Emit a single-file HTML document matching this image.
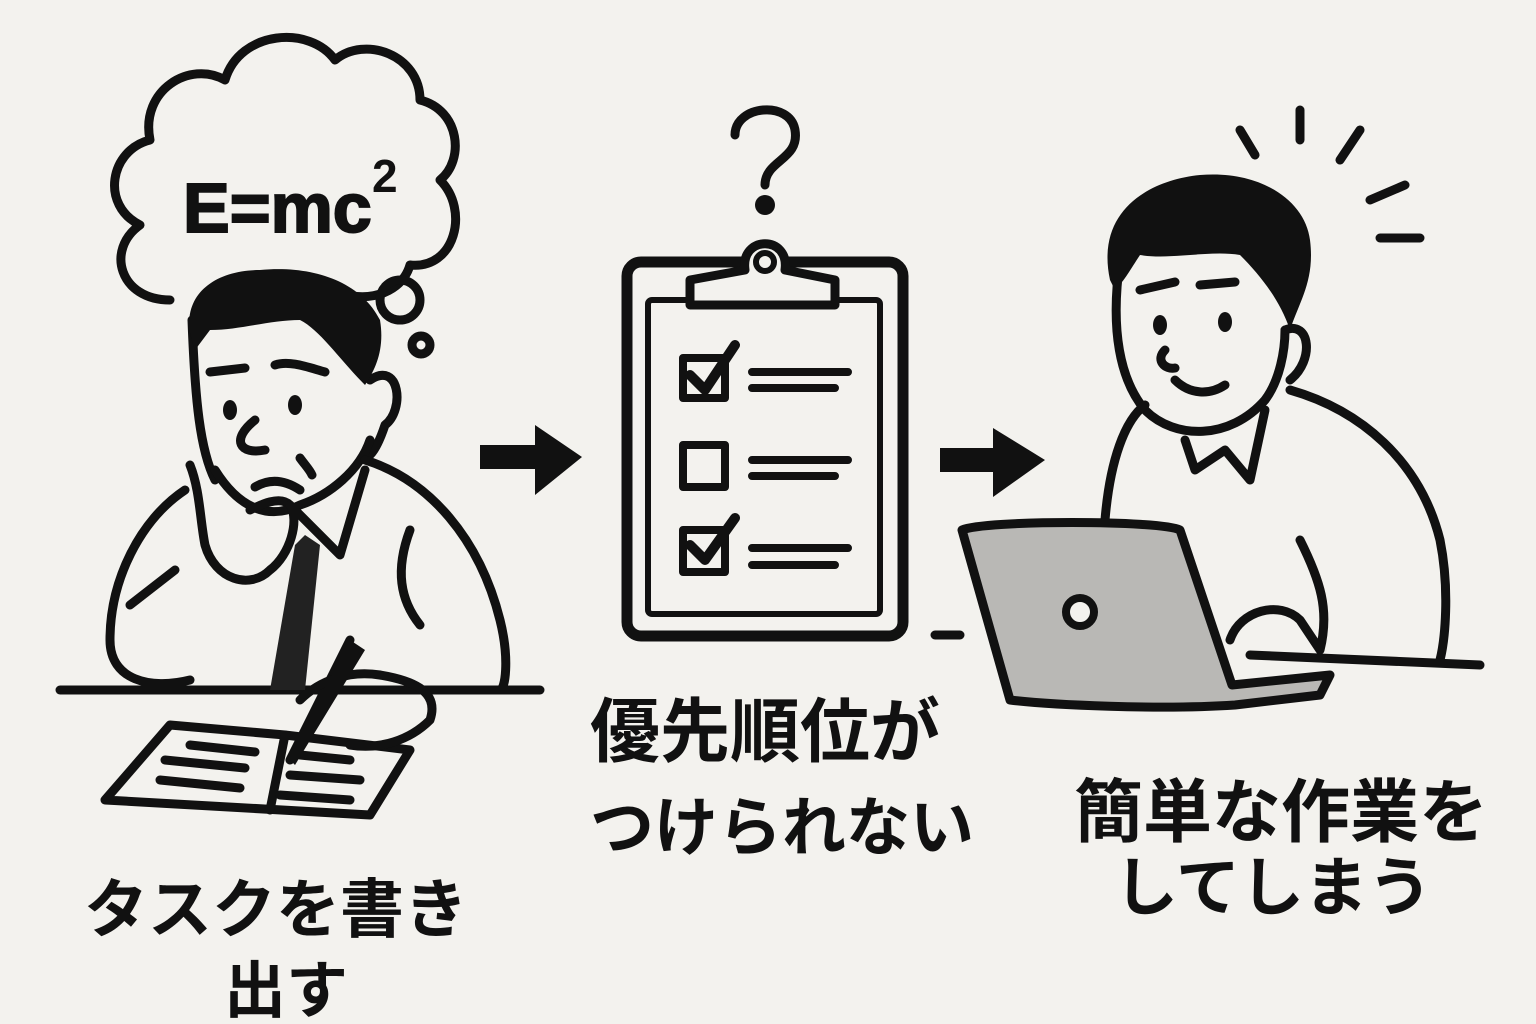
<!DOCTYPE html>
<html><head><meta charset="utf-8"><style>
html,body{margin:0;padding:0;background:#f3f2ee;}
svg{display:block}
text{font-family:"Liberation Sans","Noto Sans CJK JP",sans-serif;fill:#111;font-weight:bold;}
</style></head><body>
<svg width="1536" height="1024" viewBox="0 0 1536 1024" xmlns="http://www.w3.org/2000/svg">
<rect width="1536" height="1024" fill="#f3f2ee"/>
<g fill="none" stroke="#111" stroke-width="9" stroke-linecap="round" stroke-linejoin="round">
<path d="M170,300 C120,300 105,250 140,225 C100,205 110,150 150,140 C140,90 190,60 225,80 C240,30 310,25 335,60 C365,35 420,55 420,100 C460,110 465,160 440,180 C470,210 455,270 410,265 C400,300 350,305 330,285"/>
<circle cx="400" cy="300" r="20"/>
<circle cx="421" cy="345" r="9"/>
<path d="M192,320 C195,400 200,450 215,480"/>
<path d="M370,380 C400,360 405,410 385,425 C380,440 375,450 370,455"/>
<path d="M215,470 C240,510 270,520 300,505 C330,495 360,470 370,440"/>
<path d="M210,372 L245,368 M275,365 C290,360 310,368 325,372"/>
<path d="M255,420 C230,440 240,455 265,450"/>
<path d="M300,458 C305,465 310,470 312,475 M255,487 C270,478 285,480 300,490"/>
<path d="M185,490 C140,520 110,580 110,640 C110,680 150,690 190,680"/>
<path d="M365,460 C430,480 480,540 500,620 C510,660 505,690 500,690"/>
<path d="M190,465 C200,490 200,520 205,545 C215,580 250,590 270,570 C290,555 300,520 290,505 C280,495 260,505 250,510"/>
<path d="M290,505 L340,555 L365,470"/>
<path d="M175,570 L130,605"/>
<path d="M410,530 C395,570 400,600 420,625"/>
<path d="M60,690 L540,690"/>
<path d="M105,800 L170,725 L285,735 L410,750 L370,815 L105,800 Z"/>
<path d="M285,735 L270,810"/>
<path d="M165,760 L245,768 M160,780 L240,788 M190,745 L255,752 M290,775 L360,780 M300,755 L350,760 M280,795 L350,800"/>
<path d="M290,760 L350,640"/>
<path d="M300,700 C320,680 350,670 380,675 C410,680 440,690 430,720 C410,740 380,750 350,745"/>
<path d="M480,457 L545,457" stroke-width="24" stroke-linecap="butt"/>
<path d="M940,460 L1000,460" stroke-width="24" stroke-linecap="butt"/>
<path d="M735,135 C735,105 790,100 795,130 C800,160 765,160 765,185"/>
<rect x="627" y="262" width="276" height="374" rx="14" stroke-width="11"/>
<rect x="648" y="300" width="232" height="314" rx="4" stroke-width="6"/>
<path d="M690,305 L690,280 L745,270 C740,235 790,235 785,270 L835,280 L835,305 Z" fill="#f3f2ee" stroke-width="9"/>
<rect x="683" y="358" width="42" height="40" stroke-width="8"/>
<rect x="683" y="445" width="42" height="42" stroke-width="8"/>
<rect x="683" y="530" width="42" height="42" stroke-width="8"/>
<path d="M690,375 L705,390 L735,345 M690,545 L705,560 L735,518" stroke-width="10"/>
<path d="M752,372 L848,372 M752,388 L835,388 M752,460 L848,460 M752,476 L835,476 M752,548 L848,548 M752,565 L835,565" stroke-width="8"/>
<path d="M1120,260 C1110,330 1120,380 1145,410 C1175,440 1230,440 1265,400 C1280,380 1285,350 1285,330"/>
<path d="M1285,330 C1310,320 1315,360 1290,380"/>
<path d="M1140,290 L1175,282 M1200,285 L1235,282 M1175,380 C1190,395 1210,395 1225,385 M1165,350 C1155,360 1165,370 1175,368"/>
<path d="M1145,405 C1125,420 1110,460 1105,520 M1290,390 C1360,410 1420,460 1440,540 C1450,590 1445,640 1440,660"/>
<path d="M1185,440 L1195,470 L1225,450 L1250,480 L1265,410"/>
<path d="M935,635 L960,635 M1250,655 L1480,665"/>
<path d="M1300,540 C1320,580 1330,610 1320,650 M1230,640 C1240,610 1280,600 1300,620 L1320,650"/>
<path d="M1240,130 L1255,155 M1300,110 L1300,140 M1360,130 L1340,160 M1405,185 L1370,200 M1380,238 L1420,238"/>
</g>
<path d="M195,350 C175,300 210,270 260,270 C310,265 360,280 380,320 C385,350 375,370 365,385 C340,360 320,330 300,320 C270,320 240,330 210,330 Z" fill="#111"/>
<path d="M1110,280 C1095,210 1150,180 1200,175 C1260,170 1305,200 1310,240 C1315,280 1300,300 1290,330 C1280,300 1260,275 1240,255 C1210,250 1170,260 1140,255 C1130,270 1125,280 1115,290 Z" fill="#111"/>
<path d="M295,545 L305,535 L320,545 L305,690 L270,690 Z" fill="#222"/>
<path d="M350,640 L365,650 L295,765 L288,758 Z" fill="#111"/>
<ellipse cx="230" cy="410" rx="7" ry="10" fill="#111"/>
<ellipse cx="295" cy="405" rx="7" ry="10" fill="#111"/>
<ellipse cx="1160" cy="325" rx="7" ry="10" fill="#111"/>
<ellipse cx="1225" cy="322" rx="7" ry="10" fill="#111"/>
<polygon points="535,425 582,457 535,495" fill="#111"/>
<polygon points="993,428 1045,460 993,497" fill="#111"/>
<circle cx="765" cy="205" r="10" fill="#111"/>
<circle cx="765" cy="262" r="9" fill="none" stroke="#111" stroke-width="6"/>
<path d="M962,530 C985,520 1160,520 1180,530 L1232,685 L1330,675 L1320,695 L1235,705 C1160,710 1050,705 1010,700 Z" fill="#b9b8b5" stroke="#111" stroke-width="9" stroke-linejoin="round"/>
<circle cx="1080" cy="612" r="14" fill="#f3f2ee" stroke="#111" stroke-width="8"/>
<text x="183" y="232" font-size="70" font-weight="normal" stroke="#111" stroke-width="2">E=mc</text>
<text x="372" y="192" font-size="46">2</text>
<text x="590" y="756" font-size="70">優先順位が</text>
<text x="590" y="850" font-size="64">つけられない</text>
<text x="84" y="932" font-size="64">タスクを書き</text>
<text x="224" y="1012" font-size="62">出す</text>
<text x="1074" y="836" font-size="69">簡単な作業を</text>
<text x="1114" y="910" font-size="64">してしまう</text>
</svg>
</body></html>
